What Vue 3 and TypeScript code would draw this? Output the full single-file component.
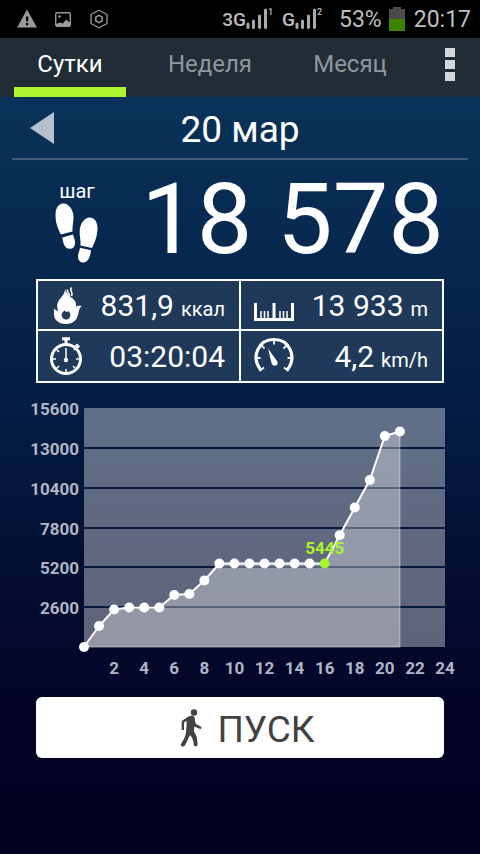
<script setup lang="ts">
import { computed, ref } from 'vue'

const tabs = ['Сутки', 'Неделя', 'Месяц']
const activeTab = ref('Сутки')

const hourly = [
  0, 1370, 2450, 2580, 2580, 2580, 3390, 3460, 4340, 5445, 5445, 5445,
  5445, 5445, 5445, 5445, 5445, 7300, 9100, 10900, 13770, 14065,
]
const selectedHour = 16
const yLabels = [15600, 13000, 10400, 7800, 5200, 2600]
const xLabels = [2, 4, 6, 8, 10, 12, 14, 16, 18, 20, 22, 24]

const plot = { left: 84, top: 13, width: 361, height: 239, max: 15600, hours: 24 }
const bottom = plot.top + plot.height
const px = (hour: number): number => plot.left + (hour * plot.width) / plot.hours
const py = (value: number): number => bottom - (value * plot.height) / plot.max

const points = computed(() =>
  hourly.map((value, hour) => ({ hour, value, x: px(hour), y: py(value) })),
)
const line = computed(() => points.value.map((p) => `${p.x},${p.y}`).join(' '))
const area = computed(() => `${line.value} ${px(hourly.length - 1)},${bottom} ${plot.left},${bottom}`)
</script>

<template>
  <div class="screen">
    <div class="status">
      <svg class="status-icon" viewBox="0 0 22 22" aria-hidden="true">
        <path fill="#999" fill-rule="evenodd" d="M11 1.500 21 19.500H1ZM10 8.500v5h2.200v-5ZM10 15v2.200h2.200V15Z" />
      </svg>
      <svg class="status-icon picture" viewBox="0 0 22 22" aria-hidden="true">
        <rect x="3.700" y="4.700" width="14.600" height="13.600" rx="1.500" fill="none" stroke="#999" stroke-width="1.400" />
        <circle cx="7.500" cy="8.500" r="1.300" fill="#999" />
        <path d="M4 18v-2l4.500-1.500 2.500 1 3-4 4 3V18Z" fill="#999" />
      </svg>
      <svg class="status-icon" viewBox="0 0 22 22" aria-hidden="true">
        <path d="M11 2.200 19 6.500v9L11 19.800 3 15.500v-9Z" fill="none" stroke="#999" stroke-width="1.300" stroke-linejoin="round" />
        <path d="M11 7.300 14.200 9.100v3.800L11 14.700 7.800 12.900V9.100Z" fill="none" stroke="#999" stroke-width="1.500" />
      </svg>
      <div class="status-right">
        <div class="network">
          <span>3G</span>
          <svg class="bars" viewBox="0 0 22 22" aria-hidden="true">
            <path d="M2 16v3.500M7.500 13v6.500M13.500 8v11.500M19.500 2v17.500" />
          </svg>
          <sup>1</sup>
        </div>
        <div class="network second">
          <span>G</span>
          <svg class="bars" viewBox="0 0 22 22" aria-hidden="true">
            <path d="M2 16v3.500M7.500 13v6.500M13.500 8v11.500M19.500 2v17.500" />
          </svg>
          <sup>2</sup>
        </div>
        <span class="percent">53%</span>
        <svg class="battery" viewBox="0 0 16 24" aria-hidden="true">
          <path d="M4 0h8v2h4v10H0V2h4Z" fill="#4b4b4b" />
          <path d="M0 12h16v12H0Z" fill="#3c8400" />
        </svg>
        <span>20:17</span>
      </div>
    </div>

    <nav class="tabs">
      <button
        v-for="tab in tabs"
        :key="tab"
        type="button"
        class="tab"
        :class="{ active: tab === activeTab }"
        @click="activeTab = tab"
      >
        {{ tab }}
      </button>
      <button type="button" class="more" aria-label="Меню">
        <i></i><i></i><i></i>
      </button>
    </nav>

    <main>
      <header class="date">
        <button type="button" class="prev" aria-label="Назад">
          <svg viewBox="0 0 24 32" aria-hidden="true"><path d="M0 16 24 0v32Z" fill="#b5c1cf" /></svg>
        </button>
        <h1>20 мар</h1>
      </header>

      <section class="steps">
        <div class="steps-label">
          <span>шаг</span>
          <svg viewBox="0 0 44 60" aria-hidden="true">
            <g fill="#fff">
              <path d="M8 .500C13 0 18 6 18.500 13c.300 6-1.500 11-1 15.500L6 31.500C3 26 .500 20 .500 12 .500 5 3.500 1 8 .500Z" />
              <path d="M7.300 34.500 18 31.500c1 3.500 2.500 6.500 2 9.500-.500 3.500-3 5-5.500 4.800C9.500 45.500 8 40 7.300 34.500Z" />
              <path d="M35.500 14.500C40 15 43 20 42.500 27c-.500 7-3 13-5.500 18L25.500 42.500C26 37 24.500 34 24.700 28c.300-8 5.300-14 10.800-13.500Z" />
              <path d="M25 44.700 36 47.300c-.500 6-3 12-7.500 12.200-3 0-5.500-2-5.500-6 0-3 1.500-5.500 2-8.800Z" />
            </g>
          </svg>
        </div>
        <strong>18 578</strong>
      </section>

      <section class="stats">
        <div class="stat">
          <svg class="stat-icon" viewBox="0 0 42 42" aria-hidden="true">
            <path
              fill="#fff"
              fill-rule="evenodd"
              d="M20 5C21 9 24 12 27 14C30.500 16.500 31.500 19 31 23C32.500 21.500 34 21.500 36.700 22C34 24 34 27 33 31C31.500 37 27 40 21 40C13.500 40 8.500 35.500 9 30C9.200 28 8.700 26.500 9 24.500C10.500 26 11.500 27 13 27C11.500 22 12 19 14.500 15.500C17 12 20 10 20 5ZM20 26.500C17.500 27.500 16.500 29.500 16.700 31.500C17 34 19 35.500 21 35.500C23.500 35.500 25.500 33.500 25.300 31C25.200 29.500 24.500 28.500 23.800 27C22.500 28.500 21 28.500 20 26.500Z"
            />
            <path fill="none" stroke="#fff" stroke-width="1.600" d="M26.500 3.500c-3 3.500 2.500 4.500 0 8.500M22.500 5.500c-1 3 2 3.500 2 6.500" />
          </svg>
          <p>831,9<small> ккал</small></p>
        </div>
        <div class="stat">
          <svg class="stat-icon" viewBox="0 0 42 42" aria-hidden="true">
            <path d="M2.500 19v16.500h37V19M21 19v16" fill="none" stroke="#fff" stroke-width="3" />
            <path d="M8 27v7M11.500 27v7M15 27v7M27 27v7M30.500 27v7M34 27v7" fill="none" stroke="#fff" stroke-width="1.500" />
          </svg>
          <p>13 933<small> m</small></p>
        </div>
        <div class="stat">
          <svg class="stat-icon" viewBox="0 0 42 42" aria-hidden="true">
            <circle cx="21" cy="24" r="14.500" fill="none" stroke="#fff" stroke-width="3" />
            <path d="M17 3.700h8M21 4v5M31 9.500l3 3" fill="none" stroke="#fff" stroke-width="3" />
            <path d="M32.500 11 29 15M21 13v12M21 34v4M7 24h4M31 24h4M11.500 14.500l2.500 2.500M11.500 33.500 14 31M30.500 33.500 28 31" fill="none" stroke="#fff" stroke-width="1.500" />
            <circle cx="21" cy="25" r="2.200" fill="#fff" />
          </svg>
          <p>03:20:04</p>
        </div>
        <div class="stat">
          <svg class="stat-icon" viewBox="0 0 42 42" aria-hidden="true">
            <path d="M7.500 34.500C-2 22 5 4.500 21 4.500S44 22 34.500 34.500" fill="none" stroke="#fff" stroke-width="3.200" />
            <path d="M6.500 36 11 32.500M35.500 36 31 32.500M3 23h4.500M39 23h-4.500M21 4v5.500M8.500 10.500l3 3M33.500 10.500l-3 3" fill="none" stroke="#fff" stroke-width="1.800" />
            <path d="M15 13.500 24.300 26.500c1 2-.300 4-2 4.200-2 .300-3.300-.700-3.800-2.700Z" fill="#fff" />
          </svg>
          <p>4,2<small> km/h</small></p>
        </div>
      </section>

      <svg class="chart" viewBox="0 0 480 302" role="img" aria-label="Шаги по часам">
        <rect :x="plot.left" :y="plot.top" :width="plot.width" :height="plot.height" class="plot" />
        <g v-for="label in yLabels" :key="label">
          <line
            v-if="label < plot.max"
            :x1="plot.left"
            :x2="plot.left + plot.width"
            :y1="Math.round(py(label))"
            :y2="Math.round(py(label))"
            class="grid"
          />
          <text x="79" :y="py(label) + 7" text-anchor="end">{{ label }}</text>
        </g>
        <text v-for="label in xLabels" :key="label" :x="px(label)" y="279" text-anchor="middle">{{ label }}</text>
        <polygon :points="area" class="area" />
        <polyline :points="line" class="line" />
        <circle
          v-for="p in points"
          :key="p.hour"
          :cx="p.x"
          :cy="p.y"
          r="5"
          :class="p.hour === selectedHour ? 'selected' : 'dot'"
        />
        <text :x="px(selectedHour)" :y="py(5445) - 10" text-anchor="middle" class="selected">5445</text>
      </svg>

      <button type="button" class="start">
        <svg viewBox="0 0 22 38" aria-hidden="true">
          <circle cx="14" cy="3.500" r="3.200" fill="#424242" />
          <path
            fill="#424242"
            d="M8.500 7.500c2-1.200 5-1 6 .500.500 3 .500 5 1.500 7l5.500 3-.800 2.200L14.500 17.500l-.700 4.500c2 3.500 3.700 6 3.700 14 0 1.700-3.500 2-3.700 0C13.500 31 12 28 10 26c-2 4-3.500 8-5.500 11-1.500 1.500-4.500 0-3.500-2C4 30 6 27 6.300 20l.500-8L4 13.500V21H1.700v-9Z"
          />
        </svg>
        <span>ПУСК</span>
      </button>
    </main>
  </div>
</template>

<style>
body {
  margin: 0;
  background: #020020;
}
</style>

<style scoped>
.screen {
  min-height: 100vh;
  display: flex;
  flex-direction: column;
  color: #fff;
  font-family: Roboto, "Noto Sans", sans-serif;
}
button {
  margin: 0;
  padding: 0;
  border: 0;
  background: none;
  color: inherit;
  font: inherit;
  cursor: pointer;
}
svg {
  display: block;
}
.status {
  display: flex;
  align-items: center;
  height: 38px;
  padding: 0 9px 0 16px;
  background: #000;
  color: #bebebe;
  font-size: 23px;
}
.status-icon {
  width: 22px;
  height: 22px;
}
.picture {
  margin: 0 14px;
}
.status-right {
  display: flex;
  align-items: center;
  margin-left: auto;
}
.network {
  display: flex;
  align-items: center;
  font-size: 19px;
  font-weight: 500;
}
.network sup {
  align-self: flex-start;
  width: 6px;
  font-size: 9px;
  line-height: 8px;
}
.second {
  margin: 0 16px 0 8px;
}
.bars {
  width: 22px;
  height: 22px;
  fill: none;
  stroke: #a9a9a9;
  stroke-width: 3;
  stroke-linecap: round;
}
.battery {
  width: 16px;
  height: 24px;
  margin: 0 9px 0 7px;
}
.tabs {
  display: grid;
  grid-template-columns: repeat(3, 7fr) 3fr;
  height: 59px;
  background: #202d37;
}
.tab {
  margin: 0 14px;
  padding-top: 2px;
  border-bottom: 10px solid transparent;
  color: #8f979e;
  font-size: 24px;
}
.tab.active {
  border-color: #aef72f;
  color: #fff;
}
.more {
  display: flex;
  flex-direction: column;
  align-items: center;
  gap: 3px;
  padding-top: 10px;
}
.more i {
  width: 10px;
  height: 9px;
  background: #d1d6da;
}
main {
  flex: 1;
  background: linear-gradient(#09335a, #06284f 20%, #031c43 42%, #030d31 65%, #030427 80%, #020020);
}
.date {
  display: grid;
  grid-template-columns: 60px 1fr 60px;
  align-items: center;
  height: 61px;
  margin: 0 12px;
  border-bottom: 2px solid #465d79;
}
.prev {
  padding-left: 18px;
}
.prev svg {
  width: 24px;
  height: 32px;
}
h1 {
  margin: 0;
  padding-top: 4px;
  font-size: 37px;
  font-weight: 400;
  line-height: 44px;
  text-align: center;
}
.steps {
  display: flex;
  justify-content: space-between;
  height: 119px;
  padding: 0 36px 0 55px;
}
.steps-label {
  display: flex;
  flex-direction: column;
  align-items: center;
  padding-top: 19px;
  font-size: 20px;
  line-height: 24px;
}
.steps-label svg {
  width: 44px;
  height: 60px;
}
.steps strong {
  font-size: 99px;
  font-weight: 400;
  line-height: 119px;
}
.stats {
  display: grid;
  grid-template-columns: 1fr 1fr;
  grid-template-rows: 48px 50px;
  gap: 2px;
  margin: 0 36px;
  border: 2px solid #fff;
  background: #fff;
}
.stat {
  display: flex;
  align-items: center;
  justify-content: space-between;
  padding: 0 14px 0 12px;
  background: #1f395a;
}
.stat:nth-child(odd) {
  padding-left: 7px;
}
.stat-icon {
  flex: none;
  width: 42px;
  height: 42px;
}
.stat p {
  margin: 0;
  font-size: 30px;
  white-space: nowrap;
}
.stat small {
  margin-left: 2px;
  font-size: 20px;
}
.chart {
  width: 100%;
  margin-top: 12px;
}
.chart text {
  fill: #b0b6c4;
  font-size: 17px;
  font-weight: 700;
}
.plot {
  fill: #fff;
  fill-opacity: 0.37;
}
.grid {
  stroke: #03173f;
  stroke-width: 2;
}
.area {
  fill: #fff;
  fill-opacity: 0.33;
  stroke: #fff;
  stroke-opacity: 0.5;
  stroke-width: 1;
}
.line {
  fill: none;
  stroke: #fff;
  stroke-width: 2;
}
.dot {
  fill: #fff;
}
.chart .selected {
  fill: #a8f52d;
}
.start {
  display: flex;
  align-items: center;
  justify-content: center;
  gap: 15px;
  width: calc(100% - 72px);
  height: 61px;
  margin: 0 36px;
  padding-left: 15px;
  border-radius: 6px;
  background: #fff;
  color: #424242;
  font-size: 37px;
}
.start svg {
  width: 22px;
  height: 38px;
}
.start span {
  padding-top: 3px;
}
</style>
